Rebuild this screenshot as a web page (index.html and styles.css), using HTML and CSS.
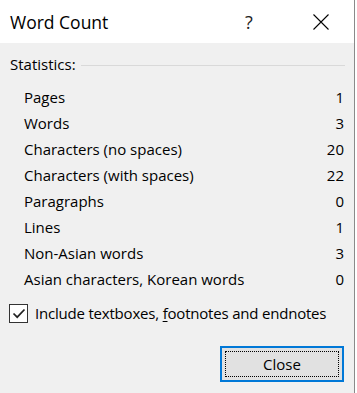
FILE: index.html
```html
<!DOCTYPE html>
<html>
<head>
<meta charset="utf-8">
<link rel="stylesheet" href="styles.css">
</head>
<body>
<div class="dialog">
  <div class="titlebar">
    <span class="title">Word Count</span>
    <span class="help">?</span>
    <span class="close">
      <svg width="16" height="16" viewBox="0 0 16 16"><path d="M0.5 0.5 L15.5 15.5 M15.5 0.5 L0.5 15.5" stroke="#000" stroke-width="1.1" fill="none"/></svg>
    </span>
  </div>
  <div class="content">
    <div class="group-head"><span>Statistics:</span><span class="rule"></span></div>
    <div class="stats">
      <div class="row"><span>Pages</span><span>1</span></div>
      <div class="row"><span>Words</span><span>3</span></div>
      <div class="row"><span>Characters (no spaces)</span><span>20</span></div>
      <div class="row"><span>Characters (with spaces)</span><span>22</span></div>
      <div class="row"><span>Paragraphs</span><span>0</span></div>
      <div class="row"><span>Lines</span><span>1</span></div>
      <div class="row"><span>Non-Asian words</span><span>3</span></div>
      <div class="row"><span>Asian characters, Korean words</span><span>0</span></div>
    </div>
    <div class="check">
      <span class="box"><svg width="17" height="17" viewBox="0 0 17 17"><path d="M3.5 8.5 L7.2 12.2 L14.5 4.5" stroke="#222" stroke-width="1.7" fill="none"/></svg></span>
      <span class="check-label">Include textboxes, <span class="key">f</span>ootnotes and endnotes</span>
    </div>
    <div class="actions">
      <div class="btn"><span class="focus">Close</span></div>
    </div>
  </div>
</div>
</body>
</html>
```

FILE: styles.css
```css
html, body {
  margin: 0;
  padding: 0;
  background: #ffffff;
}
body {
  width: 357px;
  height: 393px;
  overflow: hidden;
  font-family: "Open Sans", "Noto Sans", sans-serif;
  color: #000;
}
.dialog {
  width: 354px;
  height: 393px;
  background: #f0f0f0;
  border-right: 1px solid #8a8a8a;
  display: flex;
  flex-direction: column;
}
.titlebar {
  height: 43px;
  background: #ffffff;
  display: flex;
  align-items: center;
  flex-shrink: 0;
}
.title {
  font-size: 17.5px;
  padding-left: 10px;
  flex: 1;
  line-height: 20px;
}
.help {
  font-size: 18px;
  color: #222;
  width: 10px;
  margin-right: 58px;
  line-height: 20px;
}
.close {
  width: 16px;
  height: 16px;
  margin-right: 25px;
  display: flex;
}
.content {
  padding: 0 9px 0 10px;
  font-size: 15px;
  display: flex;
  flex-direction: column;
}
.group-head {
  margin-top: 11px;
  height: 20px;
  line-height: 20px;
  display: flex;
  align-items: center;
}
.rule {
  flex: 1;
  height: 1px;
  background: #d9d9d9;
  margin-left: 5px;
  position: relative;
  top: 1px;
}
.stats {
  margin-top: 10px;
  padding-left: 14px;
  padding-right: 1px;
}
.row {
  height: 26px;
  line-height: 26px;
  display: flex;
  justify-content: space-between;
}
.check {
  margin-top: 12px;
  height: 19px;
  display: flex;
  align-items: center;
  gap: 7px;
  margin-left: -1px;
}
.box {
  width: 17px;
  height: 17px;
  border: 1px solid #333;
  background: #fff;
  display: flex;
}
.check-label {
  line-height: 19px;
  letter-spacing: -0.2px;
}
.key {
  text-decoration: underline;
  text-underline-offset: 2px;
}
.actions {
  margin-top: 23px;
  display: flex;
  justify-content: flex-end;
  padding-right: 1px;
}
.btn {
  border: 2px solid #0078d7;
  background: #e1e1e1;
  display: flex;
  padding: 3px;
  box-sizing: content-box;
  width: 114px;
  height: 26px;
}
.focus {
  flex: 1;
  border: 1px dotted #000;
  display: flex;
  align-items: center;
  justify-content: center;
  font-size: 15px;
}
```
